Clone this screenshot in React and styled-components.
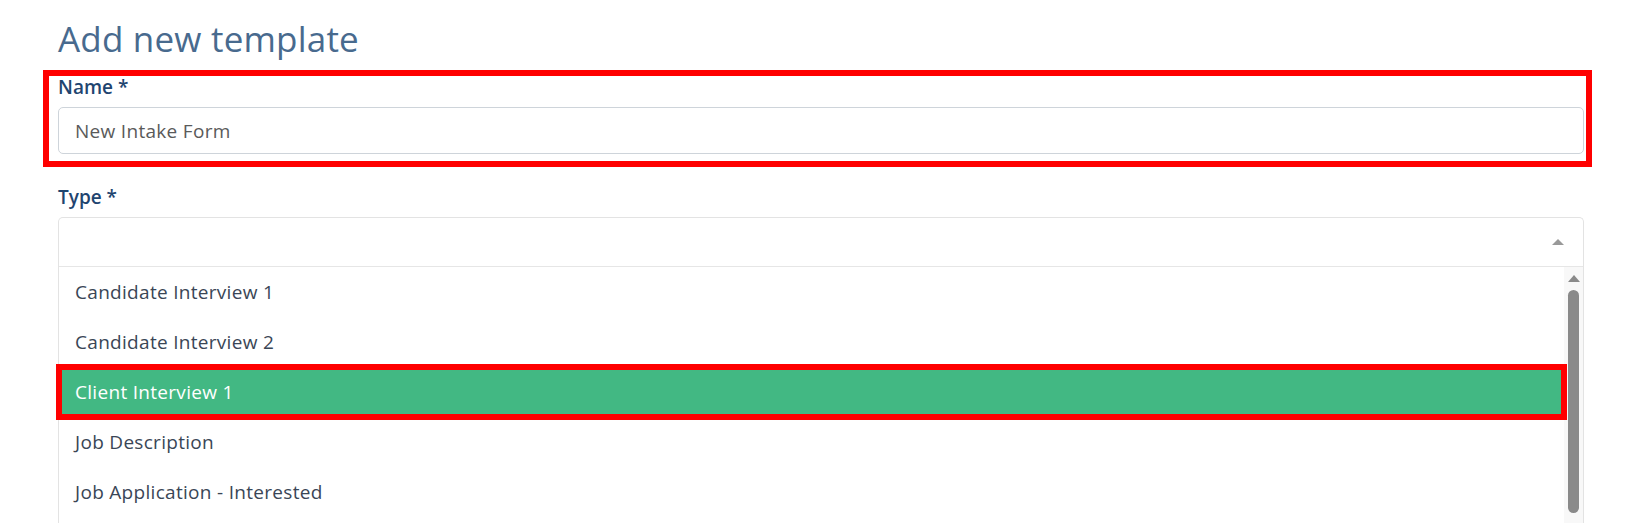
import styled, { createGlobalStyle } from "styled-components";

const GlobalStyle = createGlobalStyle`
  html, body {
    margin: 0;
    padding: 0;
    background: #ffffff;
    overflow: hidden;
  }
  body {
    font-family: "Open Sans", "Lato", sans-serif;
  }
`;

const Page = styled.div`
  padding: 18px 42px 0 58px;
`;

const Title = styled.h1`
  margin: 0;
  font-size: 35px;
  line-height: 42px;
  font-weight: 400;
  letter-spacing: 0.2px;
  color: #486a8e;
`;

const Highlight = styled.div`
  margin: 10px -8px 0 -15px;
  padding: 0 2px 7px 9px;
  border: 6px solid #ff0000;
`;

const Field = styled.div`
  margin-top: 19px;
`;

const Label = styled.label`
  display: block;
  font-size: 19px;
  line-height: 23px;
  font-weight: 600;
  color: #1f4570;
  margin-bottom: 8px;
`;

const Input = styled.input`
  display: block;
  box-sizing: border-box;
  width: 100%;
  height: 47px;
  padding: 0 16px;
  border: 1px solid #ced4da;
  border-radius: 5px;
  font-family: inherit;
  font-size: 19px;
  letter-spacing: 0.3px;
  color: #5a5a5a;
  background: #fff;
  outline: none;
`;

const Select = styled.div`
  border: 1px solid #e3e3e3;
  border-bottom: none;
  border-radius: 5px 5px 0 0;
`;

const Control = styled.div`
  display: flex;
  align-items: center;
  justify-content: flex-end;
  height: 48px;
  padding-right: 19px;
  border-bottom: 1px solid #e6e6e6;
`;

const Caret = styled.span`
  width: 0;
  height: 0;
  border-left: 6px solid transparent;
  border-right: 6px solid transparent;
  border-bottom: 6px solid #999999;
`;

const Menu = styled.div`
  display: flex;
  height: 300px;
`;

const Options = styled.ul`
  flex: 1;
  list-style: none;
  margin: 0;
  padding: 0;
`;

const Option = styled.li`
  position: relative;
  z-index: ${({ $selected }) => ($selected ? 1 : 0)};
  height: 50px;
  display: flex;
  align-items: center;
  padding-left: 16px;
  font-size: 19px;
  letter-spacing: 0.3px;
  color: ${({ $selected }) => ($selected ? "#ffffff" : "#3a4656")};
  background: ${({ $selected }) => ($selected ? "#42b883" : "transparent")};
  outline: ${({ $selected }) => ($selected ? "6px solid #ff0000" : "none")};
  outline-offset: -3px;
`;

const Track = styled.div`
  width: 19px;
  background: #f8f8f8;
  display: flex;
  flex-direction: column;
  align-items: center;
`;

const ArrowUp = styled.span`
  margin-top: 8px;
  width: 0;
  height: 0;
  border-left: 6px solid transparent;
  border-right: 6px solid transparent;
  border-bottom: 7px solid #8a8a8a;
`;

const Thumb = styled.div`
  margin-top: 8px;
  width: 11px;
  height: 223px;
  border-radius: 6px;
  background: #8a8a8a;
`;

const options = [
  "Candidate Interview 1",
  "Candidate Interview 2",
  "Client Interview 1",
  "Job Description",
  "Job Application - Interested",
];

export default function App() {
  return (
    <>
      <GlobalStyle />
      <Page>
        <Title>Add new template</Title>
        <Highlight>
          <Label>Name *</Label>
          <Input defaultValue="New Intake Form" readOnly />
        </Highlight>
        <Field>
          <Label>Type *</Label>
          <Select>
            <Control>
              <Caret />
            </Control>
            <Menu>
              <Options>
                {options.map((o) => (
                  <Option key={o} $selected={o === "Client Interview 1"}>
                    {o}
                  </Option>
                ))}
              </Options>
              <Track>
                <ArrowUp />
                <Thumb />
              </Track>
            </Menu>
          </Select>
        </Field>
      </Page>
    </>
  );
}
